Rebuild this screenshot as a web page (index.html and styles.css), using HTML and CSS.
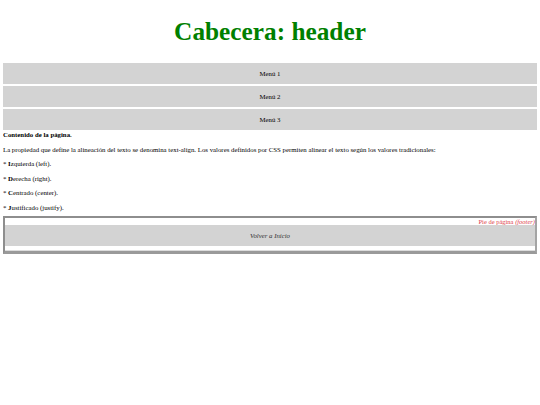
FILE: index.html
```html
<!DOCTYPE html>
<html lang="es">
<head>
<meta charset="utf-8">
<title>Alineación del texto</title>
<link rel="stylesheet" href="styles.css">
</head>
<body>
<header class="cabecera"><h1>Cabecera: header</h1></header>
<nav class="menu">
  <div class="menu-item">Menú 1</div>
  <div class="menu-item">Menú 2</div>
  <div class="menu-item">Menú 3</div>
</nav>
<main class="contenido">
  <p class="titulo">Contenido de la página.</p>
  <p>La propiedad que define la alineación del texto se denomina text-align. Los valores definidos por CSS permiten alinear el texto según los valores tradicionales:</p>
  <p>* <b>I</b>zquierda (left).</p>
  <p>* <b>D</b>erecha (right).</p>
  <p>* <b>C</b>entrado (center).</p>
  <p class="ultimo">* <b>J</b>ustificado (justify).</p>
</main>
<footer class="pie">
  <div class="pie-texto">Pie de página <i>(footer)</i></div>
  <div class="volver"><i>Volver a Inicio</i></div>
</footer>
</body>
</html>
```
FILE: styles.css
```css
html, body {
  background: #ffffff;
}
body {
  margin: 0 3px;
  font-family: "Liberation Serif", "Times New Roman", serif;
  color: #000;
}
.cabecera {
  height: 63px;
  display: flex;
  align-items: center;
  justify-content: center;
}
.cabecera h1 {
  margin: 0;
  font-size: 25.3px;
  font-weight: bold;
  color: #008000;
}
.menu {
  display: flex;
  flex-direction: column;
  gap: 2px;
}
.menu-item {
  height: 21px;
  background: #d3d3d3;
  display: flex;
  align-items: center;
  justify-content: center;
  font-size: 6.8px;
}
.contenido {
  font-size: 6.8px;
  padding-top: 1px;
}
.contenido p {
  margin: 0 0 6.5px 0;
  line-height: 8px;
}
.contenido .titulo {
  font-weight: bold;
}
.contenido .ultimo {
  margin-bottom: 4.5px;
}
.pie {
  border-style: solid;
  border-width: 2px 2px 3px 2px;
  border-color: #8e8e8e #a4a4a4 #9a9a9a #8e8e8e;
  box-shadow: inset 0 -1px 0 #dcdcdc;
  padding-bottom: 5px;
}
.pie-texto {
  text-align: right;
  color: #e0404a;
  font-size: 6.5px;
  line-height: 7px;
}
.volver {
  height: 21px;
  background: #d3d3d3;
  display: flex;
  align-items: center;
  justify-content: center;
  font-size: 6.8px;
  color: #333;
}
```
